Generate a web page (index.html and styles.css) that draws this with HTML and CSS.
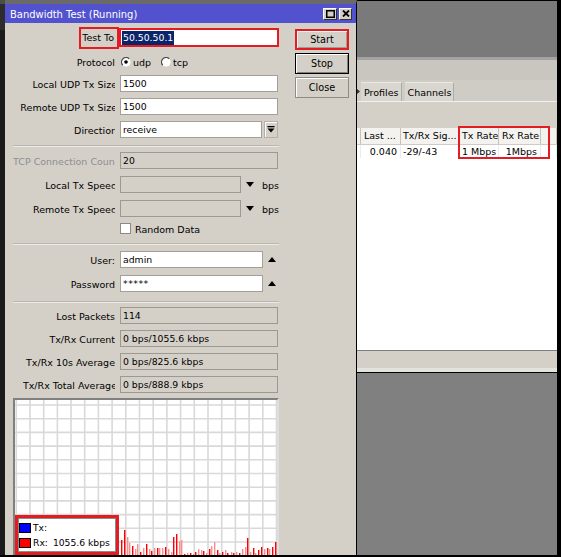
FILE: index.html
```html
<!DOCTYPE html>
<html lang="en">
<head>
<meta charset="utf-8">
<title>Bandwidth Test</title>
<link rel="stylesheet" href="styles.css">
</head>
<body>
<div class="screen">
  <div class="left-strip"></div>

  <div class="dialog">
    <div class="titlebar">
      <span class="title">Bandwidth Test (Running)</span>
      <span class="tb-btn"><svg width="9" height="8" viewBox="0 0 9 8"><rect x="0.75" y="0.75" width="7.5" height="6.5" fill="none" stroke="#000" stroke-width="1.5"/></svg></span>
      <span class="tb-btn tb-close"><svg width="8" height="7" viewBox="0 0 8 7"><path d="M1 0.5 L7 6.5 M7 0.5 L1 6.5" stroke="#000" stroke-width="1.8"/></svg></span>
    </div>

    <div class="dlg-body">
      <div class="form">
        <div class="row">
          <div class="lbl lbl-vis"><span class="lbl-hl">Test To</span></div>
          <div class="field field-hl"><span class="sel">50.50.50.1</span></div>
        </div>
        <div class="row row-proto">
          <div class="lbl">Protocol</div>
          <div class="radios">
            <svg class="radio" width="10" height="10" viewBox="0 0 10 10"><circle cx="5" cy="5" r="4.6" fill="#fff"/><path d="M1.75 8.25 A4.6 4.6 0 0 1 8.25 1.75" fill="none" stroke="#4a4a4a" stroke-width="1.3"/><circle cx="5" cy="5" r="1.8" fill="#000"/></svg>
            <span class="rlabel">udp</span>
            <svg class="radio" width="10" height="10" viewBox="0 0 10 10"><circle cx="5" cy="5" r="4.6" fill="#fff"/><path d="M1.75 8.25 A4.6 4.6 0 0 1 8.25 1.75" fill="none" stroke="#4a4a4a" stroke-width="1.3"/></svg>
            <span class="rlabel">tcp</span>
          </div>
        </div>
        <div class="row row-tight">
          <div class="lbl"><span class="cut">Local UDP Tx Size</span></div>
          <div class="field">1500</div>
        </div>
        <div class="row">
          <div class="lbl"><span class="cut">Remote UDP Tx Size</span></div>
          <div class="field">1500</div>
        </div>
        <div class="row">
          <div class="lbl"><span class="cut">Direction</span></div>
          <div class="field field-short">receive</div>
          <div class="dd-btn"><svg width="8" height="7" viewBox="0 0 8 7"><rect x="0.5" y="0" width="7" height="1.3" fill="#000"/><path d="M0.5 2.4 H7.5 L4 6.6 Z" fill="#000"/></svg></div>
        </div>

        <div class="sep"></div>

        <div class="row after-sep">
          <div class="lbl lbl-dis">TCP Connection Count</div>
          <div class="field field-dis">20</div>
        </div>
        <div class="row row-loose">
          <div class="lbl"><span class="cut">Local Tx Speed</span></div>
          <div class="field field-dis field-speed"></div>
          <svg class="tri" width="8" height="5" viewBox="0 0 8 5"><path d="M0 0H8L4 5Z" fill="#000"/></svg>
          <span class="unit">bps</span>
        </div>
        <div class="row row-loose">
          <div class="lbl"><span class="cut">Remote Tx Speed</span></div>
          <div class="field field-dis field-speed"></div>
          <svg class="tri" width="8" height="5" viewBox="0 0 8 5"><path d="M0 0H8L4 5Z" fill="#000"/></svg>
          <span class="unit">bps</span>
        </div>
        <div class="row row-check">
          <div class="lbl"></div>
          <span class="cbox"></span>
          <span class="cbox-label">Random Data</span>
        </div>

        <div class="sep sep-2"></div>

        <div class="row row-user">
          <div class="lbl">User:</div>
          <div class="field field-user">admin</div>
          <svg class="tri" width="8" height="5" viewBox="0 0 8 5"><path d="M0 5H8L4 0Z" fill="#000"/></svg>
        </div>
        <div class="row row-loose">
          <div class="lbl">Password</div>
          <div class="field field-user pw">*****</div>
          <svg class="tri" width="8" height="5" viewBox="0 0 8 5"><path d="M0 5H8L4 0Z" fill="#000"/></svg>
        </div>

        <div class="sep sep-3"></div>

        <div class="row row-stat1">
          <div class="lbl">Lost Packets</div>
          <div class="field field-dis">114</div>
        </div>
        <div class="row">
          <div class="lbl">Tx/Rx Current</div>
          <div class="field field-dis">0 bps/1055.6 kbps</div>
        </div>
        <div class="row">
          <div class="lbl">Tx/Rx 10s Average</div>
          <div class="field field-dis">0 bps/825.6 kbps</div>
        </div>
        <div class="row">
          <div class="lbl"><span class="cut">Tx/Rx Total Average</span></div>
          <div class="field field-dis">0 bps/888.9 kbps</div>
        </div>

        <div class="graph">
          <svg width="262" height="160" viewBox="0 0 262 160">
            <path fill="none" stroke="#d9d9d9" stroke-width="1.6" d="M1.3 0V160M15 0V160M28.7 0V160M42.4 0V160M56 0V160M69.7 0V160M83.4 0V160M97.1 0V160M110.8 0V160M124.5 0V160M138.2 0V160M151.9 0V160M165.6 0V160M179.3 0V160M193 0V160M206.7 0V160M220.4 0V160M234.1 0V160M247.8 0V160M261.5 0V160M0 5H262M0 18.7H262M0 32.4H262M0 46.1H262M0 59.8H262M0 73.5H262M0 87.2H262M0 100.9H262M0 114.6H262M0 128.3H262M0 142H262M0 155.7H262"/>
            <g fill="#ff0000">
              <rect x="106" y="140" width="1.4" height="30"/><rect x="109" y="130" width="1.4" height="40"/><rect x="117" y="146" width="1.4" height="30"/><rect x="125" y="152" width="1.4" height="30"/><rect x="131" y="144" width="1.4" height="30"/><rect x="136" y="151" width="1.4" height="30"/><rect x="142" y="148" width="1.4" height="30"/><rect x="150" y="147" width="1.4" height="30"/><rect x="158" y="137" width="1.4" height="30"/><rect x="161" y="134" width="1.4" height="30"/><rect x="169" y="154" width="1.4" height="30"/><rect x="175" y="153" width="1.4" height="30"/><rect x="180" y="152" width="1.4" height="30"/><rect x="188" y="151" width="1.4" height="30"/><rect x="194" y="149" width="1.4" height="30"/><rect x="202" y="150" width="1.4" height="30"/><rect x="207" y="152" width="1.4" height="30"/><rect x="212" y="153" width="1.4" height="30"/><rect x="218" y="153" width="1.4" height="30"/><rect x="224" y="153" width="1.4" height="30"/><rect x="232" y="138" width="1.4" height="30"/><rect x="238" y="148" width="1.4" height="30"/><rect x="243" y="150" width="1.4" height="30"/><rect x="246" y="147" width="1.4" height="30"/><rect x="252" y="148" width="1.4" height="30"/><rect x="257" y="147" width="1.4" height="30"/><rect x="260" y="142" width="1.4" height="30"/>
            </g>
            <g fill="#ff8c8c">
              <rect x="112" y="137" width="1.4" height="30"/><rect x="114" y="143" width="1.4" height="30"/><rect x="120" y="149" width="1.4" height="30"/><rect x="122" y="144" width="1.4" height="30"/><rect x="128" y="148" width="1.4" height="30"/><rect x="134" y="149" width="1.4" height="30"/><rect x="139" y="148" width="1.4" height="30"/><rect x="144" y="148" width="1.4" height="30"/><rect x="147" y="148" width="1.4" height="30"/><rect x="153" y="149" width="1.4" height="30"/><rect x="156" y="152" width="1.4" height="30"/><rect x="164" y="141" width="1.4" height="30"/><rect x="166" y="140" width="1.4" height="30"/><rect x="172" y="153" width="1.4" height="30"/><rect x="178" y="154" width="1.4" height="30"/><rect x="183" y="149" width="1.4" height="30"/><rect x="186" y="150" width="1.4" height="30"/><rect x="191" y="153" width="1.4" height="30"/><rect x="196" y="146" width="1.4" height="30"/><rect x="199" y="142" width="1.4" height="30"/><rect x="204" y="153" width="1.4" height="30"/><rect x="210" y="150" width="1.4" height="30"/><rect x="216" y="152" width="1.4" height="30"/><rect x="221" y="152" width="1.4" height="30"/><rect x="227" y="149" width="1.4" height="30"/><rect x="230" y="147" width="1.4" height="30"/><rect x="235" y="152" width="1.4" height="30"/><rect x="240" y="153" width="1.4" height="30"/><rect x="249" y="149" width="1.4" height="30"/><rect x="254" y="149" width="1.4" height="30"/>
            </g>
          </svg>
          <div class="legend">
            <div class="lg-row"><span class="sw sw-tx"></span><span>Tx:</span></div>
            <div class="lg-row"><span class="sw sw-rx"></span><span>Rx:</span><span class="lg-val">1055.6 kbps</span></div>
          </div>
        </div>
      </div>

      <div class="buttons">
        <div class="btn btn-start">Start</div>
        <div class="btn btn-stop">Stop</div>
        <div class="btn btn-close">Close</div>
      </div>
    </div>
  </div>

  <div class="bgwin">
    <div class="bw-top"></div>
    <div class="bw-edge"></div>
    <div class="bw-tool"></div>
    <div class="bw-tabs">
      <span class="tab-cut"><svg width="3" height="5" viewBox="0 0 3 5"><path d="M0 0L3 2.5L0 5Z" fill="#333"/></svg></span>
      <span class="tab">Profiles</span>
      <span class="tab">Channels</span>
    </div>
    <div class="bw-hl"></div>
    <div class="bw-gap"></div>
    <div class="bw-head">
      <span class="cell c0"></span>
      <span class="cell c1">Last ...</span>
      <span class="cell c2">Tx/Rx Sig...</span>
      <span class="cell c3">Tx Rate</span>
      <span class="cell c4">Rx Rate</span>
      <span class="cell c5"></span>
    </div>
    <div class="bw-row">
      <span class="cell c0"></span>
      <span class="cell c1 num">0.040</span>
      <span class="cell c2">-29/-43</span>
      <span class="cell c3 num">1 Mbps</span>
      <span class="cell c4 num">1Mbps</span>
      <span class="cell c5"></span>
    </div>
    <div class="bw-white"></div>
    <div class="bw-status"></div>
    <div class="bw-dark"></div>
    <div class="bw-mark"></div>
  </div>
</div>
</body>
</html>
```

FILE: styles.css
```css
* { box-sizing: border-box; }
html, body { margin: 0; padding: 0; background: #000; }
body {
  font-family: "DejaVu Sans", "Liberation Sans", sans-serif;
  font-size: 9.5px;
  color: #000;
}

.screen {
  display: flex;
  align-items: flex-start;
  width: 561px;
  height: 557px;
  overflow: hidden;
  background: #000;
}

.left-strip {
  flex: none;
  width: 5px;
  height: 555px;
  background: linear-gradient(#4c4c4c 0 4px, #2c2c2c 4px 30px, #1b1b1b 30px);
}

/* ---------- dialog ---------- */
.dialog {
  flex: none;
  width: 352px;
  height: 555px;
  border-top: 4px solid #6a6a6a;
  border-right: 1px solid #000;
  background: #d4d0c8;
  display: flex;
  flex-direction: column;
  overflow: hidden;
}

.titlebar {
  flex: none;
  height: 19px;
  background: #5252cf;
  color: #fff;
  display: flex;
  align-items: center;
  padding: 0 4px 0 5px;
}
.title { flex: 1; font-size: 9.95px; white-space: nowrap; padding-top: 2px; }
.tb-btn {
  width: 14px;
  height: 12px;
  background: #d4d0c8;
  border: 1px solid;
  border-color: #fff #333 #333 #fff;
  display: flex;
  align-items: center;
  justify-content: center;
}
.tb-close { width: 13px; margin-left: 2px; }

.dlg-body { flex: 1; display: flex; min-height: 0; }

.form {
  flex: none;
  width: 280px;
  padding: 6px 0 0 8px;
  display: flex;
  flex-direction: column;
}

.row {
  flex: none;
  display: flex;
  align-items: center;
  height: 17px;
  margin-top: 6px;
}
.row:first-child { margin-top: 0; }
.row-proto { height: 20px; }
.row-tight { margin-top: 3px; }
.row-loose { margin-top: 7px; }
.after-sep { margin-top: 5px; }
.row-check { margin-top: 3px; }
.row-user { margin-top: 6px; }
.row-stat1 { margin-top: 4px; }

.lbl {
  flex: none;
  width: 102px;
  height: 17px;
  padding-top: 1px;
  margin-right: 5px;
  text-align: right;
  white-space: nowrap;
  overflow: hidden;
  line-height: 17px;
}
.row-proto .lbl { padding-top: 0; }
.lbl-vis { overflow: visible; padding-top: 0; }
.lbl-dis { color: #8e8e8e; }
.cut { margin-right: -2px; }

.lbl-hl {
  display: inline-block;
  line-height: 18px;
  padding: 0 3px 0 1px;
  margin-right: -2px;
  outline: 2px solid #e31c24;
}

.field {
  flex: none;
  width: 158px;
  height: 17px;
  background: #fff;
  border: 1px solid #a3a09a;
  padding-left: 2px;
  font-size: 9.3px;
  line-height: 16px;
  white-space: nowrap;
  overflow: hidden;
}
.field-dis { background: #d4d0c8; border-color: #9c9993; }
.field-short { width: 142px; }
.field-speed { width: 121px; }
.field-user { width: 143px; }
.pw { letter-spacing: 0.5px; }
.field-hl {
  outline: 2px solid #e31c24;
  outline-offset: -1px;
  padding-left: 1px;
}
.sel {
  display: inline-block;
  background: #0a246a;
  color: #fff;
  padding: 0 1px;
  line-height: 14px;
  margin-top: 1px;
  vertical-align: top;
}

.radios { display: flex; align-items: center; margin-left: 1px; }
.radio { flex: none; display: block; }
.rlabel { margin-left: 2px; margin-right: 10px; }

.dd-btn {
  flex: none;
  width: 14px;
  height: 17px;
  margin-left: 2px;
  background: #d4d0c8;
  border: 1px solid #b3b0a9;
  box-shadow: inset 1px 1px #fff;
  display: flex;
  align-items: center;
  justify-content: center;
}

.tri { flex: none; display: block; margin-left: 5px; }
.unit { margin-left: 8px; padding-top: 1px; }

.cbox {
  flex: none;
  width: 11px;
  height: 11px;
  background: #fff;
  border: 1px solid #8a8a8a;
}
.cbox-label { margin-left: 4px; padding-top: 1px; }

.sep {
  flex: none;
  width: 266px;
  height: 2px;
  border-top: 1px solid #bbb7af;
  border-bottom: 1px solid #ecebe7;
  margin-top: 7px;
}
.sep-2 { margin-top: 6px; }
.sep-3 { margin-top: 9px; }

/* graph */
.graph {
  flex: none;
  position: relative;
  margin-top: 5px;
  width: 266px;
  height: 164px;
  border: 2px solid;
  border-color: #808080 #dedede #dedede #808080;
  background: #fff;
}
.graph svg { display: block; }

.legend {
  position: absolute;
  left: 0;
  top: 115px;
  width: 104px;
  height: 40px;
  border: 3px solid #e31c24;
  background: #fff;
  box-shadow: inset 0 0 0 1px #8a8a8a;
  padding: 2px 0 0 1px;
  font-size: 9.2px;
}
.lg-row { display: flex; align-items: center; height: 15px; }
.sw { flex: none; width: 12px; height: 10px; border: 1px solid #000; margin-right: 2px; }
.sw-tx { background: #0000ff; }
.sw-rx { background: #ff0000; }
.lg-val { margin-left: 5px; }

/* buttons */
.buttons {
  flex: none;
  margin-left: 10px;
  padding-top: 6px;
  display: flex;
  flex-direction: column;
  gap: 3px;
}
.btn {
  width: 54px;
  height: 21px;
  display: flex;
  align-items: center;
  justify-content: center;
  background: #d4d0c8;
  font-size: 9.7px;
}
.btn-start { border: 2px solid #e31c24; box-shadow: inset 1px 1px #f4f3f0, inset -1px -1px #a09d96; }
.btn-stop { border: 1px solid #000; box-shadow: inset 1px 1px #fff, inset -1px -1px #808080; }
.btn-close { border: 1px solid #8f8c86; box-shadow: inset 1px 1px #fff; }

/* ---------- background window ---------- */
.bgwin {
  flex: none;
  width: 200px;
  height: 554px;
  margin-top: 1px;
  position: relative;
  display: flex;
  flex-direction: column;
  overflow: hidden;
  background: #fff;
}
.bw-top { flex: none; height: 56px; background: #7a7a7a; }
.bw-edge { flex: none; height: 3px; background: #a3a3a3; }
.bw-tool { flex: none; height: 20px; background: #c9c6bf; }
.bw-tabs {
  flex: none;
  height: 21px;
  background: #cfccc5;
  display: flex;
  align-items: stretch;
  padding-top: 2px;
}
.tab-cut { display: flex; align-items: center; padding: 0 1px 0 0; }
.tab {
  display: flex;
  align-items: center;
  padding: 0 2px 0 3px;
  margin-right: 3px;
  background: #d9d6cf;
  border-right: 1px solid #aeaba4;
  border-top: 1px solid #ebe9e5;
  white-space: nowrap;
}
.bw-hl { flex: none; height: 1px; background: #f2f1ee; }
.bw-gap { flex: none; height: 26px; background: #d4d0c8; }

.bw-head {
  flex: none;
  height: 17px;
  display: flex;
  background: #f3f2ef;
  border-bottom: 1px solid #cfccc6;
}
.bw-row { flex: none; height: 13px; display: flex; background: #fff; }
.cell {
  flex: none;
  white-space: nowrap;
  overflow: hidden;
  padding-left: 3px;
}
.bw-head .cell { line-height: 16px; border-right: 1px solid #c5c2bb; }
.bw-row .cell { line-height: 13px; border-right: 1px solid #ececec; }
.c0 { width: 4px; padding-left: 0; }
.c1 { width: 40px; }
.c2 { width: 58px; padding-left: 2px; }
.c3 { width: 40px; }
.c4 { width: 42px; }
.c5 { flex: 1; }
.bw-row .c1.num { text-align: right; padding-right: 3px; }
.bw-row .c3.num { text-align: right; padding-right: 2px; }
.bw-row .c4.num { text-align: right; padding-right: 3px; }

.bw-white { flex: 1; background: #fff; }
.bw-status {
  flex: none;
  height: 23px;
  border-top: 1px solid #7e7e7e;
  border-bottom: 1px solid #000;
  background: linear-gradient(#d4d0c8 0 17px, #e4e2dd 17px);
}
.bw-dark { flex: none; height: 182px; background: #808080; }

.bw-mark {
  position: absolute;
  left: 101px;
  top: 125px;
  width: 92px;
  height: 33px;
  border: 2px solid #e31c24;
}
```
